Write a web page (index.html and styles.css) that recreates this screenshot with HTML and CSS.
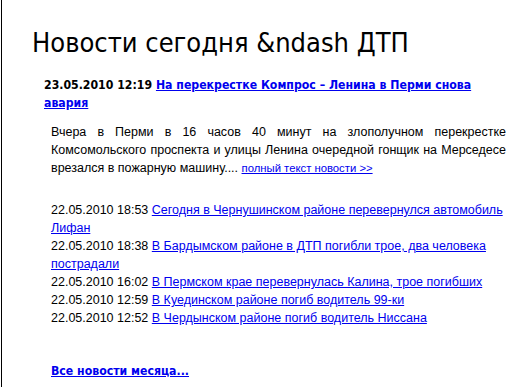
FILE: index.html
```html
<!DOCTYPE html>
<html lang="ru">
<head>
<meta charset="utf-8">
<title>Новости сегодня</title>
<link rel="stylesheet" href="styles.css">
</head>
<body>
<div class="page">
  <h1 class="title">Новости сегодня &amp;ndash ДТП</h1>
  <div class="top-news"><b class="top-date">23.05.2010 12:19</b> <a href="#" class="top-link">На перекрестке Компрос – Ленина в Перми снова авария</a></div>
  <p class="lead">Вчера в Перми в 16 часов 40 минут на злополучном перекрестке Комсомольского проспекта и улицы Ленина очередной гонщик на Мерседесе врезался в пожарную машину.... <a href="#" class="more">полный текст новости &gt;&gt;</a></p>
  <ul class="news-list">
    <li>22.05.2010 18:53 <a href="#">Сегодня в Чернушинском районе перевернулся автомобиль Лифан</a></li>
    <li>22.05.2010 18:38 <a href="#">В Бардымском районе в ДТП погибли трое, два человека пострадали</a></li>
    <li>22.05.2010 16:02 <a href="#">В Пермском крае перевернулась Калина, трое погибших</a></li>
    <li>22.05.2010 12:59 <a href="#">В Куединском районе погиб водитель 99-ки</a></li>
    <li>22.05.2010 12:52 <a href="#">В Чердынском районе погиб водитель Ниссана</a></li>
  </ul>
  <p class="all-wrap"><a href="#" class="all">Все новости месяца...</a></p>
</div>
</body>
</html>
```

FILE: styles.css
```css
html, body {
  margin: 0;
  padding: 0;
  background: #fff;
}
body {
  font-family: "Liberation Sans", Arial, sans-serif;
  color: #000;
}
a {
  color: #0000ee;
}
.page {
  margin-left: 1px;
  border-left: 1px solid #000;
  height: 387px;
  overflow: hidden;
  box-sizing: border-box;
  padding: 25px 22px 0 30px;
}
.title {
  font-family: "DejaVu Sans Condensed", "DejaVu Sans", sans-serif;
  font-size: 27px;
  font-weight: normal;
  margin: 0 0 15px 0;
  line-height: 36px;
}
.top-news {
  font-family: "DejaVu Sans Condensed", "DejaVu Sans", sans-serif;
  font-size: 12.2px;
  font-weight: bold;
  line-height: 18px;
  margin-left: 12px;
}
.lead {
  font-size: 12.5px;
  line-height: 18px;
  text-align: justify;
  margin: 11px 0 0 19px;
}
.more {
  font-size: 11.3px;
}
.news-list {
  list-style: none;
  margin: 24px -6px 0 19px;
  padding: 0;
  font-size: 12.5px;
  line-height: 18px;
}
.all-wrap {
  margin: 35px 0 0 19px;
  font-family: "DejaVu Sans Condensed", "DejaVu Sans", sans-serif;
  font-size: 12.2px;
  font-weight: bold;
  line-height: 18px;
}
```
